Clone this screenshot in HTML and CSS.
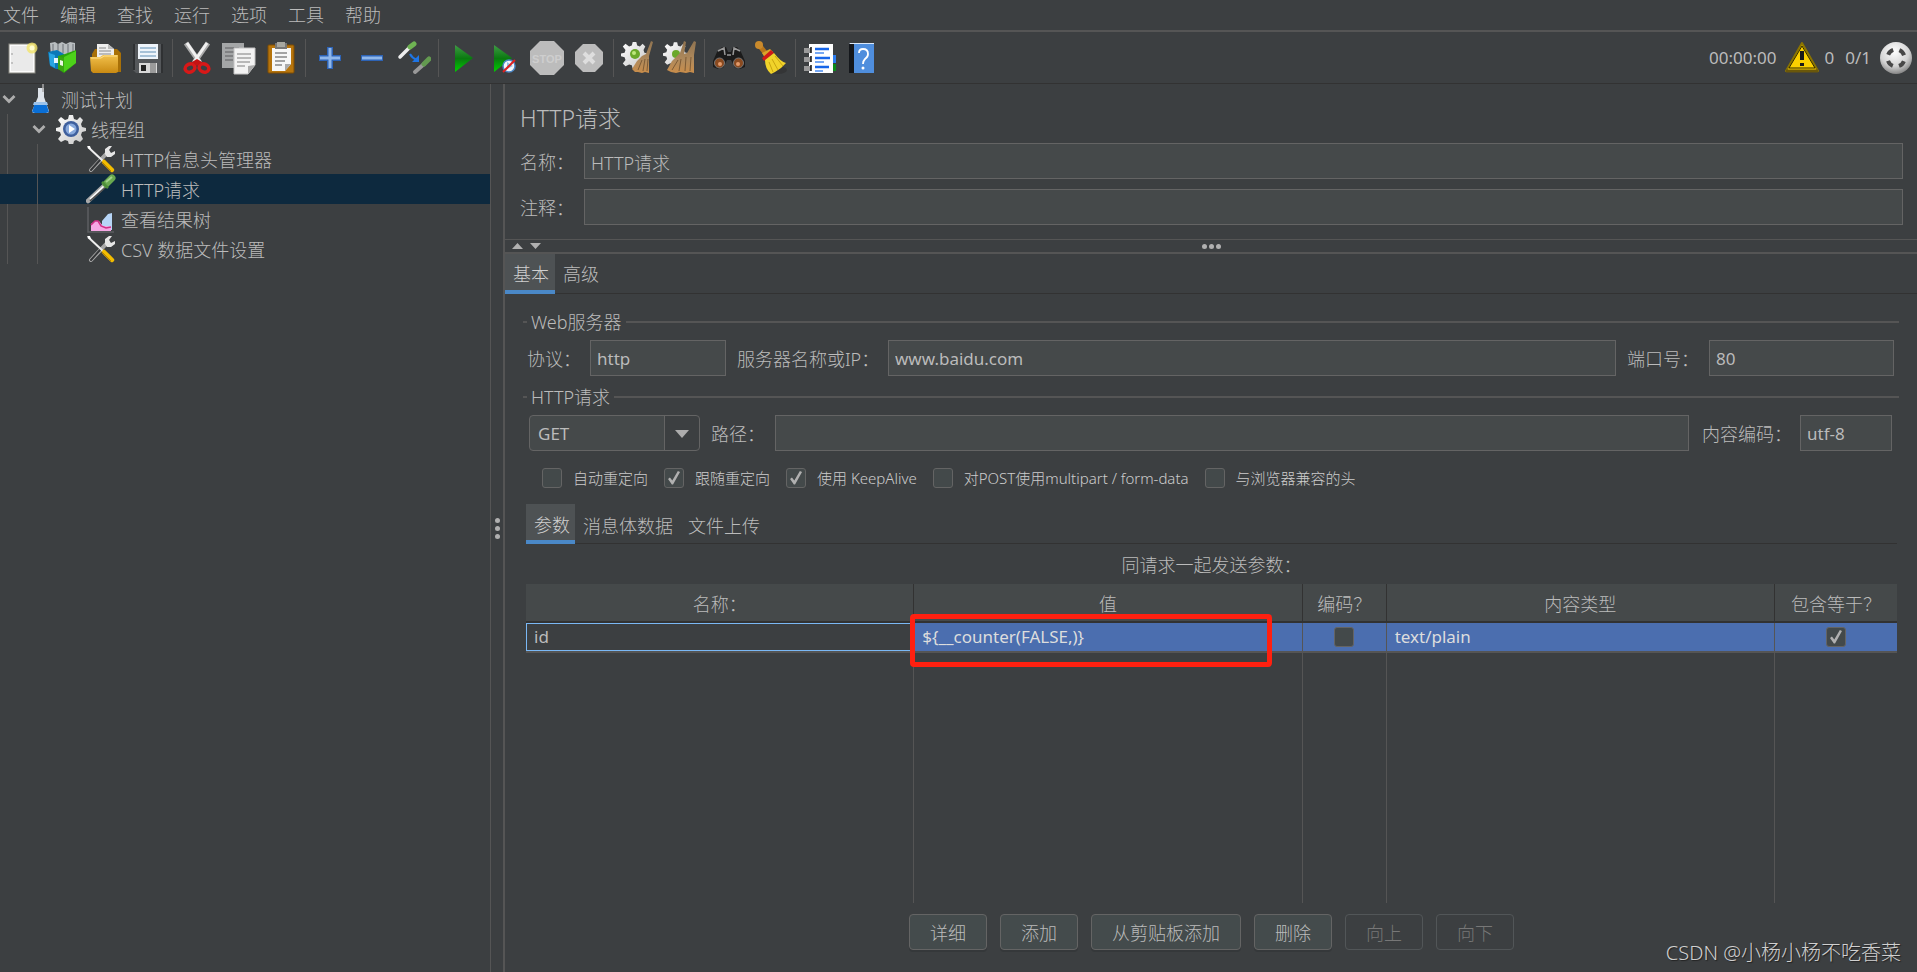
FILE: index.html
```html
<!DOCTYPE html>
<html lang="zh-CN">
<head>
<meta charset="utf-8">
<title>HTTP请求</title>
<link rel="stylesheet" href="styles.css">
</head>
<body>
<svg class="defs" aria-hidden="true">
  <defs>
    <linearGradient id="metal" x1="0" y1="0" x2="1" y2="1"><stop offset="0" stop-color="#fff"/><stop offset="1" stop-color="#c4c4c4"/></linearGradient>
    <linearGradient id="gold" x1="0" y1="0" x2="0" y2="1"><stop offset="0" stop-color="#f2c14c"/><stop offset="1" stop-color="#c98a12"/></linearGradient>
    <linearGradient id="leaf" x1="0" y1="0" x2="0" y2="1"><stop offset="0" stop-color="#3f9a45"/><stop offset=".5" stop-color="#0a7a10"/><stop offset="1" stop-color="#00d000"/></linearGradient>
    <linearGradient id="straw" x1="0" y1="0" x2="0" y2="1"><stop offset="0" stop-color="#8f7350"/><stop offset=".6" stop-color="#b08a5c"/><stop offset="1" stop-color="#c98d4a"/></linearGradient>
    <radialGradient id="ball" cx=".45" cy=".3" r=".75"><stop offset="0" stop-color="#fff"/><stop offset=".6" stop-color="#d4d4d4"/><stop offset="1" stop-color="#777"/></radialGradient>
    <symbol id="cog" viewBox="0 0 30 30">
      <path fill="url(#metal)" d="M13 1h4l1 4 3 1 3-3 3 3-2 4 1 3 4 1v3l-4 1-1 3 2 4-3 3-4-2-2 1-1 4h-4l-1-4-3-1-4 2-3-3 3-4-1-3-4-1v-3l4-1 1-3-3-4 3-3 4 3 3-1z"/>
    </symbol>
    <symbol id="tools" viewBox="0 0 30 30">
      <path d="M5 26 22 8" stroke="#a8a8a8" stroke-width="4" stroke-linecap="round"/>
      <path d="M5 26 14 16" stroke="#343638" stroke-width="2" stroke-linecap="round"/>
      <path d="M19 10V5l4-3h3l-3 4 2 3 4-2v3l-4 3h-4z" fill="#e6e6e6"/>
      <path d="M2 3 17 17" stroke="#eee" stroke-width="2"/><path d="M1 2l3 0 1 3-2 0z" fill="#fff"/>
      <path d="M18 18 26 26" stroke="#f3bd00" stroke-width="4.500" stroke-linecap="round"/><path d="M16 18 25 27" stroke="#b98300" stroke-width="1"/>
    </symbol>
    <symbol id="pipette" viewBox="0 0 30 30">
      <path d="M2 27 19 11" stroke="#a9a9a9" stroke-width="4.500" stroke-linecap="round"/>
      <path d="M4 25 19 11" stroke="#fff" stroke-width="1.500"/><path d="M4 27 20 13" stroke="#4b4b4b" stroke-width="1.500"/>
      <path d="M20 10 26 4" stroke="#69a84f" stroke-width="7" stroke-linecap="round"/>
      <path d="M16 8 22 14" stroke="#4f8f3a" stroke-width="2.500"/><path d="M20 8 26 3" stroke="#a3d38b" stroke-width="2"/>
    </symbol>
    <symbol id="arrow" viewBox="0 0 14 10"><path d="M1.500 2 7 7.500 12.500 2" fill="none" stroke="#adadad" stroke-width="2.800"/></symbol>
  </defs>
</svg>

<nav class="menubar" aria-label="菜单">
  <button>文件</button><button>编辑</button><button>查找</button><button>运行</button><button>选项</button><button>工具</button><button>帮助</button>
</nav>

<header class="toolbar">
  <button aria-label="新建"><svg viewBox="0 0 34 34"><rect x="4" y="3" width="26" height="29" fill="#fbfbfb" stroke="#8a8a82"/><rect x="6" y="5" width="22" height="25" fill="#eaeaea"/><circle cx="27" cy="7" r="5.500" fill="#f2e56a" opacity=".8"/><circle cx="27" cy="7" r="2.500" fill="#fffdd0"/><path d="M6 13h2M6 22h2" stroke="#999"/></svg></button>
  <button aria-label="模板"><svg viewBox="0 0 34 34"><path d="M3 2l5-1 3 2 4-2 4 2 4-2 5 1v15H4z" fill="#b9bec0"/><path d="M6 3v9M11 3v9M16 3v9M21 3v9M26 3v9" stroke="#858b8e" stroke-width="1.500"/><path d="M1 11 10 9l7 4v15l-8 0L3 25z" fill="#0b79b8"/><path d="M2 12l6 2v13l-5-3z" fill="#29a5e3"/><path d="M11 15l7-2 11-4v13L17 32l-6-4z" fill="#2ba50a"/><path d="M17 16l12-6v12l-12 9z" fill="#4dd21a"/><path d="M7 17h4v5H7z" fill="#e8f5ff"/><path d="M11 15l6 2v14l-6-3z" fill="#3aa512"/><path d="M13 19l3 1v5l-3-1z" fill="#eaf7e2"/></svg></button>
  <button aria-label="打开"><svg viewBox="0 0 34 34"><path d="M3 13 6 8h22l4 4v19H3z" fill="#a87007"/><path d="M8 3h11l6 5v10H8z" fill="#eee"/><path d="M19 3v5h6" fill="#bbb"/><path d="M10 7h7M10 10h12M10 13h12" stroke="#888"/><path d="M1 16h10l3-2h15v17l-2 1H4l-2-2z" fill="url(#gold)"/><path d="M2 17h10l3-2h13" fill="none" stroke="#ffe08a"/></svg></button>
  <button aria-label="保存"><svg viewBox="0 0 34 34"><path d="M2 3h30v29H5l-3-3z" fill="#55585b"/><path d="M2 3h2v26h-2zM30 3h2v29h-2z" fill="#2f3133"/><path d="M7 3h20v15H7z" fill="#eef4fa"/><path d="M9 7h16M9 11h16M9 15h16" stroke="#8fb0cb" stroke-width="1.500"/><path d="M8 22h18v10H8z" fill="#d8d8d8"/><path d="M10 24h5v6h-5z" fill="#222"/><path d="M19 22h6v10h-6z" fill="#9b9b9b"/></svg></button>
  <i class="sep"></i>
  <button aria-label="剪切"><svg viewBox="0 0 34 34"><path d="M6 2 20 22M28 2 14 22" stroke="#aaa" stroke-width="5"/><path d="M7 2 20 21M27 2 14 21" stroke="#f0f0f0" stroke-width="3"/><g fill="none" stroke="#d81818" stroke-width="3.500"><ellipse cx="10" cy="27" rx="5" ry="4" transform="rotate(-25 10 27)"/><ellipse cx="24" cy="27" rx="5" ry="4" transform="rotate(25 24 27)"/></g><path d="M12 21l5-3 5 3-5 4z" fill="#c51212"/></svg></button>
  <button aria-label="复制"><svg viewBox="0 0 34 34"><path d="M0 2h22v25H0z" fill="#a4a6a7"/><path d="M3 7h14M3 11h10M3 15h8M3 19h8" stroke="#747678" stroke-width="1.500"/><path d="M12 7h21v17l-7 9H12z" fill="#f3f3f3" stroke="#c3c3c3"/><path d="M33 24l-7 9v-8z" fill="#aaa"/><path d="M15 13h14M15 17h14M15 21h13M15 25h8" stroke="#a5a5a5" stroke-width="1.500"/></svg></button>
  <button aria-label="粘贴"><svg viewBox="0 0 34 34"><rect x="4" y="4" width="26" height="28" rx="1" fill="#b6740c" stroke="#7e4d03"/><path d="M8 7h19v16l-6 7H8z" fill="#f7f7f7"/><path d="M27 23l-6 7v-7z" fill="#aaa"/><path d="M11 2h12v6H11z" fill="#777"/><path d="M13 1h8v5h-8z" fill="#a7a7a0"/><path d="M11 12h12M11 16h12M11 20h10M11 24h7" stroke="#888" stroke-width="1.500"/></svg></button>
  <i class="sep"></i>
  <button aria-label="展开"><svg viewBox="0 0 34 34"><path d="M17 6v22M6 17h22" stroke="#2d63b5" stroke-width="6"/><path d="M17 7v20M7 17h20" stroke="#8fb7ea" stroke-width="3"/></svg></button>
  <button aria-label="折叠"><svg viewBox="0 0 34 34"><path d="M6 17h22" stroke="#2d63b5" stroke-width="6"/><path d="M7 17h20" stroke="#8fb7ea" stroke-width="3"/></svg></button>
  <button aria-label="切换"><svg viewBox="0 0 34 34"><path d="M3 16 12 7" stroke="#eee" stroke-width="3.500" stroke-linecap="round"/><path d="M13 6 17 3" stroke="#6fb453" stroke-width="5" stroke-linecap="round"/><path d="M18 31 27 23" stroke="#999" stroke-width="4" stroke-linecap="round"/><path d="M27 23l5-5" stroke="#639a50" stroke-width="5" stroke-linecap="round"/><path d="M13 13q2 4 7 6" fill="none" stroke="#1e76e8" stroke-width="2"/><path d="M22 14l0 7-7 0z" fill="#1e76e8"/></svg></button>
  <i class="sep"></i>
  <button aria-label="启动"><svg viewBox="0 0 34 34"><path d="M9 4 27 17 9 31z" fill="url(#leaf)"/></svg></button>
  <button aria-label="不停顿开始"><svg viewBox="0 0 34 34"><path d="M6 4 24 17 6 31z" fill="url(#leaf)"/><circle cx="21" cy="25" r="6" fill="#f4f7fb" stroke="#4d88c6" stroke-width="1.500"/><path d="M19 21v7l6-3z" fill="#8fc2ea"/><path d="M15 31 27 19" stroke="#d22" stroke-width="2"/></svg></button>
  <button aria-label="停止" disabled><svg viewBox="0 0 34 34"><path d="M10 0h14l10 10v14L24 34H10L0 24V10z" fill="#bcbcbc"/><text x="17" y="22" class="stop-text">STOP</text></svg></button>
  <button aria-label="关闭" disabled><svg viewBox="0 0 34 34"><path d="M11 3h12l8 8v12l-8 8H11l-8-8V11z" fill="#bcbcbc"/><path d="M12 12l10 10M22 12 12 22" stroke="#dedede" stroke-width="4"/></svg></button>
  <i class="sep"></i>
  <button aria-label="清除"><svg viewBox="0 0 34 34"><use href="#cog" x="0" y="0" width="27" height="27"/><circle cx="14" cy="13" r="5" fill="#6aa82a"/><circle cx="13" cy="12" r="2" fill="#bde87c"/><path d="M30 0l2 1-4 14v17l-4-1-3 1-4-1-3 0-3-3 5-8 5-5 4-2z" fill="url(#straw)"/><path d="M17 29l4-10M22 30l2-12M26 30l1-12" stroke="#7c5b36"/></svg></button>
  <button aria-label="清除全部"><svg viewBox="0 0 34 34"><use href="#cog" x="0" y="0" width="25" height="26"/><circle cx="13" cy="13" r="4" fill="#6aa82a"/><path d="M21 0l2 1-2 12 3-1 7-12 2 1-2 13v18l-4-1-4 1-6-1-4 1-5-1-4-2 5-9 6-6 2-2z" fill="url(#straw)"/><path d="M9 29l6-10M16 30l2-12M22 30l1-14M27 30l1-14" stroke="#7c5b36"/></svg></button>
  <i class="sep"></i>
  <button aria-label="搜索"><svg viewBox="0 0 34 34"><path d="M1 20 5 11l5-5h4l2 5h3l2-5h4l4 5 4 9v6l-5 2-5-1-4-8h-4l-4 8-5 1-5-2z" fill="#1b1b1b"/><path d="M6 10l6-3 1 7M28 10l-6-3-1 7M15 14h4" fill="none" stroke="#999" stroke-width="1.500"/><circle cx="7.500" cy="22" r="5" fill="#8a4a20" stroke="#777"/><circle cx="26.500" cy="22" r="5" fill="#8a4a20" stroke="#777"/><circle cx="8" cy="23" r="2" fill="#e39a6a"/><circle cx="26" cy="23" r="2" fill="#e39a6a"/></svg></button>
  <button aria-label="清除搜索"><svg viewBox="0 0 34 34"><ellipse cx="24" cy="29" rx="9" ry="4" fill="#2b2b2b" opacity=".5"/><path d="M5 4l8 10" stroke="#b8761a" stroke-width="5"/><circle cx="5" cy="4" r="4" fill="#c98a2c"/><path d="M8 12l8-4 3 3-8 6z" fill="#d9a429"/><path d="M8 17 17 9l3 3-10 8z" fill="#d01818"/><path d="M11 19l9-7q7 9 12 10l-5 5-6 4-4 2q-6-5-6-14z" fill="#f1d32a"/><path d="M15 21l4 10M18 18l6 11M21 15l8 10" stroke="#c9a510"/></svg></button>
  <i class="sep"></i>
  <button aria-label="函数助手"><svg viewBox="0 0 34 34"><path d="M29 14h4v8h-4z" fill="#2d7df0"/><path d="M29 23h4v7h-4z" fill="#0a8a1a"/><path d="M6 3h24v29H6z" fill="#fff"/><path d="M1 7h7v5H1zM1 16h7v5H1zM1 25h7v5H1z" fill="#9a9a9a"/><path d="M8 6v6M8 15v6M8 24v6" stroke="#111" stroke-width="1.500"/><path d="M12 8h14M12 17h15M12 26h14" stroke="#1766e8" stroke-width="2.500"/><path d="M12 12h9M12 21h9M12 30h8" stroke="#4a8cf0" stroke-width="1.500"/></svg></button>
  <button aria-label="帮助"><svg viewBox="0 0 34 34"><path d="M4 2h25v30H4z" fill="#4f8edd"/><path d="M4 2h5v30H4z" fill="#14171b"/><path d="M4 2h25v1H5z" fill="#dbe8f8"/><path d="M14 12q0-4 4-4 5 0 5 5 0 3-3 5-2 2-2 5" fill="none" stroke="#fff" stroke-width="1.800"/><circle cx="18" cy="27" r="1.500" fill="#fff"/></svg></button>
  <div class="status">
    <span>00:00:00</span>
    <svg class="warn" viewBox="0 0 34 32"><path d="M17 1 33 29H1z" fill="#fbd000" stroke="#8b7400" stroke-width="2" stroke-linejoin="round"/><path d="M17 4 30 26H4z" fill="none" stroke="#2d2600" stroke-width="1"/><path d="M1 29h32" stroke="#6a570a" stroke-width="3"/><path d="M17 9v9" stroke="#1a1a1a" stroke-width="4"/><path d="M15 21h4v3h-4z" fill="#1a1a1a"/></svg>
    <span>0</span>
    <span class="threads">0/1</span>
    <svg class="remote" viewBox="0 0 34 34"><circle cx="17" cy="17" r="16" fill="url(#ball)"/><circle cx="17" cy="17" r="8.500" fill="none" stroke="#484848" stroke-width="4" stroke-dasharray="7 6.350" stroke-dashoffset="-3.200"/></svg>
  </div>
</header>

<main class="workspace">
  <aside class="tree">
    <ul>
      <li>
        <div class="node"><svg class="toggle"><use href="#arrow"/></svg><svg class="node-icon" viewBox="0 0 30 30"><path d="M12 4h6v9l5 14q0 2-3 2H9q-3 0-3-2l6-14z" fill="#dde3ea"/><path d="M9 19h11l3 9-3 1H9l-3-1z" fill="#0a6fd6"/><path d="M8 18h13l1 3H7z" fill="#9cc3ea"/><path d="M17 8V0" stroke="#aaa" stroke-width="1.500"/></svg><span>测试计划</span></div>
        <ul class="branch level-1">
          <li>
            <div class="node"><svg class="toggle"><use href="#arrow"/></svg><svg class="node-icon" viewBox="0 0 30 30"><use href="#cog" width="30" height="30"/><circle cx="15" cy="15" r="8" fill="#3e5f9d"/><circle cx="15" cy="15" r="5.500" fill="#88a9dc"/><path d="M13 11v8l6-4z" fill="#fff"/></svg><span>线程组</span></div>
            <ul class="branch level-2">
              <li><div class="node"><svg class="node-icon"><use href="#tools"/></svg><span>HTTP信息头管理器</span></div></li>
              <li><div class="node selected"><svg class="node-icon"><use href="#pipette"/></svg><span>HTTP请求</span></div></li>
              <li><div class="node"><svg class="node-icon" viewBox="0 0 30 30"><path d="M2 3v25h26" fill="none" stroke="#5c5f61" stroke-width="1.500"/><path d="M16 17l6-7 4-1v17H16z" fill="#b7d5f7"/><path d="M5 27V20l4-3h4l4 5h4l4 1v4z" fill="#f5a7e4"/><path d="M5 21l4-4h3l3 5 5 2 5-1" fill="none" stroke="#cf2f86" stroke-width="1.500"/></svg><span>查看结果树</span></div></li>
              <li><div class="node"><svg class="node-icon"><use href="#tools"/></svg><span>CSV 数据文件设置</span></div></li>
            </ul>
          </li>
        </ul>
      </li>
    </ul>
  </aside>
  <div class="split-v"><i></i><i></i><i></i></div>

  <section class="editor">
    <div class="intro">
      <h1>HTTP请求</h1>
      <div class="line"><label for="name">名称：</label><input id="name" type="text" value="HTTP请求"></div>
      <div class="line"><label for="comment">注释：</label><input id="comment" type="text"></div>
    </div>
    <div class="split-h">
      <svg class="collapse" viewBox="0 0 30 8"><path d="M0 7h11L5.500 1zM18 1h11l-5.500 6z" fill="#b0b0b0"/></svg>
      <div class="dots"><i></i><i></i><i></i></div>
    </div>
    <div class="tabs" role="tablist"><button class="tab active" role="tab">基本</button><button class="tab" role="tab">高级</button></div>

    <div class="panel">
      <fieldset class="group">
        <legend>Web服务器</legend>
        <div class="fields">
          <label class="w-short" for="protocol">协议：</label><input class="protocol" id="protocol" type="text" value="http">
          <label class="w-server" for="server">服务器名称或IP：</label><input class="wide" id="server" type="text" value="www.baidu.com">
          <label class="w-port" for="port">端口号：</label><input class="port" id="port" type="text" value="80">
        </div>
      </fieldset>
      <fieldset class="group">
        <legend>HTTP请求</legend>
        <div class="fields request">
          <span class="combo"><select aria-label="方法"><option>GET</option></select><svg viewBox="0 0 14 8"><path d="M0 0h14L7 8z" fill="#adadad"/></svg></span>
          <label class="w-path" for="path">路径：</label><input class="wide" id="path" type="text">
          <label class="w-enc" for="encoding">内容编码：</label><input class="encoding" id="encoding" type="text" value="utf-8">
        </div>
      </fieldset>
      <div class="options">
        <label><input type="checkbox">自动重定向</label>
        <label><input type="checkbox" checked>跟随重定向</label>
        <label><input type="checkbox" checked>使用 KeepAlive</label>
        <label><input type="checkbox">对POST使用multipart / form-data</label>
        <label><input type="checkbox">与浏览器兼容的头</label>
      </div>
      <div class="tabs inner" role="tablist"><button class="tab active" role="tab">参数</button><button class="tab" role="tab">消息体数据</button><button class="tab" role="tab">文件上传</button></div>
      <div class="caption" id="caption">同请求一起发送参数：</div>
      <div class="table-area">
        <table aria-labelledby="caption">
          <colgroup><col><col><col class="c-enc"><col><col class="c-eq"></colgroup>
          <thead><tr><th>名称：</th><th>值</th><th>编码？</th><th>内容类型</th><th>包含等于？</th></tr></thead>
          <tbody>
            <tr class="row"><td class="focus">id</td><td class="value">${__counter(FALSE,)}<div class="highlight"></div></td><td class="check"><input type="checkbox" aria-label="编码？"></td><td>text/plain</td><td class="check"><input type="checkbox" aria-label="包含等于？" checked></td></tr>
            <tr class="rest"><td></td><td></td><td></td><td></td><td></td></tr>
          </tbody>
        </table>
      </div>
      <div class="actions"><button>详细</button><button>添加</button><button>从剪贴板添加</button><button>删除</button><button disabled>向上</button><button disabled>向下</button></div>
    </div>
  </section>
</main>
<div class="watermark">CSDN @小杨小杨不吃香菜</div>
</body>
</html>
```
FILE: styles.css
```css
* { box-sizing: border-box; }

:root {
  --bg: #3c3f41;
  --field: #45494a;
  --edge: #646464;
  --rule: #555555;
  --dark: #323232;
  --text: #bbbbbb;
  --blue: #4a88c7;
  --select: #4b6eaf;
}

body {
  margin: 0;
  height: 100vh;
  display: flex;
  flex-direction: column;
  overflow: hidden;
  background: var(--bg);
  color: var(--text);
  font: 300 18px/24px "Noto Sans", "Noto Sans CJK SC", sans-serif;
}

button, input, select { font: inherit; color: inherit; }
button { background: none; border: 0; padding: 0; }
.defs { position: absolute; width: 0; height: 0; }

.menubar {
  display: flex;
  gap: 21px;
  height: 32px;
  padding: 2px 3px;
  border-bottom: 2px solid var(--rule);
}

.toolbar {
  display: flex;
  align-items: center;
  height: 52px;
  padding-left: 1px;
  border-bottom: 1px solid var(--dark);
}
.toolbar button { width: 42px; height: 34px; display: flex; justify-content: center; }
.toolbar button svg { width: 34px; height: 34px; }
.stop-text { font: 700 11px "Liberation Sans", sans-serif; fill: #cecece; text-anchor: middle; }
.sep { width: 1px; height: 38px; margin: 0 3px; background: var(--rule); }
.status { margin-left: auto; display: flex; align-items: center; padding-right: 4px; font-size: 17px; font-weight: 400; }
.warn { width: 34px; height: 32px; margin: 0 5px 0 9px; }
.threads { margin: 0 8px 0 11px; }
.remote { width: 34px; height: 34px; }

.workspace { flex: 1; min-height: 0; display: flex; }

.tree { width: 491px; border-right: 1px solid var(--rule); }
.tree ul { list-style: none; margin: 0; padding: 0; }
.node { display: flex; align-items: center; height: 30px; padding-left: 2px; white-space: nowrap; }
.node span { padding-top: 2px; }
.toggle { width: 14px; height: 10px; margin-right: 10px; }
.node-icon { width: 30px; height: 30px; margin-right: 5px; }
.branch { position: relative; }
.branch::before { content: ""; position: absolute; top: 0; bottom: 0; width: 1px; background: var(--rule); }
.level-1::before { left: 7px; }
.level-2::before { left: 37px; }
.level-1 .node { padding-left: 32px; }
.level-2 .node { padding-left: 86px; }
.selected { background: #0d293e; }

.split-v {
  width: 14px;
  display: flex;
  flex-direction: column;
  align-items: center;
  justify-content: center;
  gap: 3px;
  border-right: 2px solid var(--rule);
}
.split-v i, .dots i { width: 5px; height: 5px; border-radius: 50%; background: #b0b0b0; }

.editor { flex: 1; min-width: 0; display: flex; flex-direction: column; }
.intro { padding: 20px 14px 14px 15px; display: flex; flex-direction: column; gap: 10px; }
h1 { margin: 0; font-size: 23px; line-height: 29px; font-weight: 300; }
.line { display: flex; align-items: center; }
.line label { width: 64px; padding-top: 2px; }
input[type="text"] {
  flex: 1;
  min-width: 0;
  height: 36px;
  padding: 1px 6px 0;
  border: 1px solid var(--edge);
  background: var(--field);
  font-size: 17px;
  font-weight: 400;
}
#name { font-weight: 300; font-size: 18px; }

.split-h {
  height: 15px;
  display: flex;
  align-items: center;
  border-top: 1px solid var(--rule);
  border-bottom: 2px solid var(--rule);
}
.collapse { width: 30px; height: 8px; margin-left: 7px; }
.dots { flex: 1; display: flex; justify-content: center; gap: 2px; padding-right: 37px; }

.tabs { display: flex; height: 40px; border-bottom: 1px solid var(--dark); }
.tab { height: 40px; padding: 0 8px; }
.tab.active { padding: 4px 6px 0 8px; border-bottom: 4px solid var(--blue); background: #4e5254; color: #d0d0d0; }

.panel { flex: 1; min-height: 0; display: flex; flex-direction: column; padding: 16px 20px 22px 21px; }
.group { margin: 0 -2px 9px -3px; padding: 6px 0 0; border: 0; border-top: 2px solid var(--rule); min-width: 0; }
.group legend { margin-left: 4px; padding: 0 4px; }
.fields { display: flex; align-items: center; padding: 0 5px 0 4px; white-space: nowrap; }
.fields label { padding-top: 2px; }
.w-short { width: 63px; }
.protocol { flex: 0 0 136px !important; }
.w-server { width: 162px; padding-left: 11px; }
.w-port { width: 93px; padding-left: 11px; }
.port { flex: 0 0 185px !important; }
.request { padding: 0 7px 0 6px; }
.combo { position: relative; flex: 0 0 171px; height: 36px; display: flex; }
.combo select {
  width: 100%;
  padding: 1px 8px 0;
  appearance: none;
  border: 1px solid var(--edge);
  border-radius: 4px;
  background: linear-gradient(90deg, var(--field) 134px, var(--edge) 134px, var(--edge) 135px, var(--bg) 135px);
  font-size: 17px;
  font-weight: 400;
}
.combo svg { position: absolute; right: 11px; top: 15px; width: 14px; height: 8px; pointer-events: none; }
.w-path { width: 75px; padding-left: 11px; }
.w-enc { width: 111px; padding-left: 13px; }
.encoding { flex: 0 0 92px !important; }

.options { display: flex; gap: 16px; padding: 7px 0 0 16px; font-size: 15px; line-height: 22px; white-space: nowrap; color: #cccccc; }
.options label { display: flex; align-items: center; gap: 11px; }
input[type="checkbox"] {
  appearance: none;
  width: 20px;
  height: 20px;
  margin: 0;
  border: 1px solid var(--edge);
  border-radius: 3px;
  background: #43494a;
  display: grid;
  place-items: center;
}
input[type="checkbox"]:checked::after {
  content: "";
  width: 12px;
  height: 14px;
  background: #b0b0b0;
  clip-path: polygon(0 58%, 16% 46%, 36% 68%, 82% 0, 100% 8%, 42% 96%, 32% 96%);
}

.inner { margin-top: 15px; }
.inner .tab { padding: 4px 8px 0; }
.inner .tab.active { padding: 5px 5px 0 8px; }
.inner .tab:last-child { padding-left: 7px; }

.caption { height: 40px; line-height: 42px; text-align: center; }
.table-area { flex: 1; min-height: 0; }
table { width: 100%; height: 100%; border-collapse: separate; border-spacing: 0; table-layout: fixed; }
.c-enc { width: 84px; }
.c-eq { width: 122px; }
th { height: 39px; padding: 2px 0 0; font-weight: 300; background: var(--field); border-right: 1px solid var(--dark); border-bottom: 2px solid var(--dark); }
td { padding: 0 8px; border-right: 1px solid var(--rule); }
th:last-child, td:last-child { border-right: 0; }
.row td { height: 30px; background: var(--select); color: #dddddd; border-bottom: 2px solid var(--rule); font-size: 17px; font-weight: 400; }
.row .focus { background: var(--bg); color: var(--text); box-shadow: inset 0 0 0 1px #7ab8f5; }
.row .check { padding: 0; }
.check input { margin: 0 auto; }
.value { position: relative; }
.highlight { position: absolute; left: -4px; right: 30px; top: -9px; bottom: -16px; border: 5px solid #ff2010; border-radius: 4px; }

.actions { display: flex; justify-content: center; gap: 13px; padding-top: 11px; }
.actions button { height: 36px; padding: 1px 20px 0; border: 1px solid var(--edge); border-radius: 4px; background: #444b4c; box-shadow: 0 2px 0 #35383a; }
.actions button:disabled { background: none; color: #777777; border-color: #525658; box-shadow: none; }

.watermark { position: absolute; right: 16px; bottom: 6px; font: 300 20px/26px "Noto Sans", "Noto Sans CJK SC", sans-serif; color: #d0d0d0; text-shadow: 1px 1px 1px #222222; }
```
